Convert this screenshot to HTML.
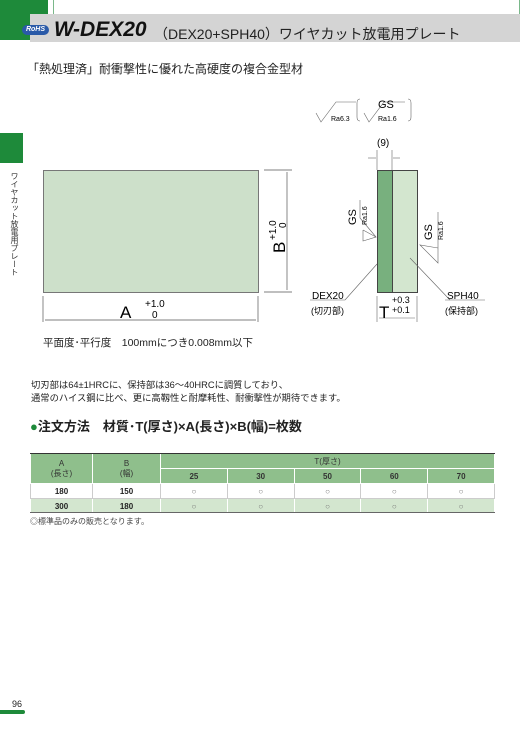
<!DOCTYPE html>
<html><head><meta charset="utf-8"><style>
*{margin:0;padding:0;box-sizing:border-box}
body{width:520px;height:738px;background:#fff;position:relative;overflow:hidden;font-family:"Liberation Sans","Noto Sans CJK JP",sans-serif;color:#222}
.a{position:absolute;white-space:nowrap}
table{border-collapse:collapse;position:absolute;left:30px;top:453px;width:465px;font-size:8px;font-weight:bold;text-align:center}
td{height:15px;border:1px solid #fff;padding:0}
.h{background:#8fbf8c;color:#333}
.g td{background:#d3e6cf}
.w td{background:#fff;border-color:#ccc}
</style></head><body>
<div class="a" style="left:0;top:0;width:48px;height:40px;background:#1e8a3a;clip-path:polygon(0 0,100% 0,100% 55%,75% 100%,0 100%)"></div>
<div class="a" style="left:53px;top:0;width:467px;height:15px;border:1px solid #7ab88a;border-top:none;background:#fff"></div>
<div class="a" style="left:30px;top:14px;width:490px;height:28px;background:#d4d4d4"></div>
<div class="a" style="left:22px;top:25px;width:27px;height:10px;background:#2a5aa8;border-radius:5px;color:#fff;font-size:7px;font-weight:bold;font-style:italic;text-align:center;line-height:10px">RoHS</div>
<div class="a" style="left:54px;top:18px;font-size:21px;font-weight:bold;font-style:italic;color:#111">W-DEX20</div>
<div class="a" style="left:154px;top:24px;font-size:14px;color:#222">（DEX20+SPH40）ワイヤカット放電用プレート</div>
<div class="a" style="left:27px;top:60px;font-size:12px">「熱処理済」耐衝撃性に優れた高硬度の複合金型材</div>
<div class="a" style="left:0;top:133px;width:23px;height:30px;background:#1e8a3a"></div>
<div class="a" style="left:10px;top:172px;font-size:8px;writing-mode:vertical-rl;text-orientation:upright;line-height:9px;color:#333">ワイヤカット放電用プレート</div>
<svg class="a" style="left:0;top:0" width="520" height="360" font-family="Liberation Sans,sans-serif">
<rect x="43.5" y="170.5" width="215" height="122" fill="#cde0ca" stroke="#777"/>
<g stroke="#555" stroke-width="0.7" fill="none">
<line x1="264" y1="170" x2="292" y2="170"/><line x1="264" y1="292" x2="292" y2="292"/>
<line x1="287" y1="172" x2="287" y2="290"/>
<line x1="43" y1="296" x2="43" y2="322"/><line x1="258" y1="296" x2="258" y2="322"/>
<line x1="45" y1="320" x2="256" y2="320"/>
</g>
<text x="120" y="318" font-size="17">A</text><text x="145" y="307" font-size="10">+1.0</text><text x="152" y="318" font-size="10">0</text>
<text transform="translate(285,253) rotate(-90)" font-size="17">B</text>
<text transform="translate(276,240) rotate(-90)" font-size="10">+1.0</text>
<text transform="translate(286,228) rotate(-90)" font-size="10">0</text>
<rect x="377.5" y="170.5" width="40" height="122" fill="#d3e6cf" stroke="#444"/>
<rect x="377.5" y="170.5" width="15" height="122" fill="#78b07e" stroke="#444"/>
<g stroke="#666" stroke-width="0.6" fill="none">
<line x1="377" y1="150" x2="377" y2="170"/><line x1="392" y1="150" x2="392" y2="170"/>
<line x1="368" y1="158" x2="376" y2="158"/><line x1="393" y1="158" x2="400" y2="158"/>
<line x1="377" y1="296" x2="377" y2="322"/><line x1="417" y1="296" x2="417" y2="322"/>
<line x1="379" y1="318" x2="415" y2="318"/>
<polyline points="316,113 321,122 336,102 356,102"/>
<polyline points="364,113 369,122 384,102 405,102"/>
<path d="M360 99 q-3 0 -3 4 v14 q0 4 3 4 M408 99 q3 0 3 4 v14 q0 4 -3 4"/>
<polyline points="363,230 376,237 363,241 363,230"/>
<polyline points="376,237 360,218 360,200"/>
<polyline points="438,248 420,245 438,263 438,212"/>
<line x1="377" y1="264" x2="345" y2="300"/><line x1="310" y1="300" x2="345" y2="300"/>
<line x1="410" y1="258" x2="450" y2="300"/><line x1="445" y1="300" x2="485" y2="300"/>
</g>
<text x="378" y="108" font-size="11">GS</text>
<text x="331" y="121" font-size="7">Ra6.3</text><text x="378" y="121" font-size="7">Ra1.6</text>
<text x="377" y="146" font-size="10">(9)</text>
<text transform="translate(356,225) rotate(-90)" font-size="11">GS</text>
<text transform="translate(367,225) rotate(-90)" font-size="7">Ra1.6</text>
<text transform="translate(432,240) rotate(-90)" font-size="11">GS</text>
<text transform="translate(443,240) rotate(-90)" font-size="7">Ra1.6</text>
<text x="312" y="299" font-size="10">DEX20</text><text x="311" y="314" font-size="9">(切刃部)</text>
<text x="447" y="299" font-size="10">SPH40</text><text x="445" y="314" font-size="9">(保持部)</text>
<text x="379" y="318" font-size="17">T</text><text x="392" y="303" font-size="9">+0.3</text><text x="392" y="313" font-size="9">+0.1</text>
</svg>
<div class="a" style="left:43px;top:335px;font-size:10.5px">平面度･平行度　100mmにつき0.008mm以下</div>
<div class="a" style="left:31px;top:379px;font-size:9.3px;line-height:12.5px">切刃部は64±1HRCに、保持部は36〜40HRCに調質しており、<br>通常のハイス鋼に比べ、更に高靱性と耐摩耗性、耐衝撃性が期待できます。</div>
<div class="a" style="left:30px;top:416px;font-size:13px;font-weight:bold"><span style="color:#1e8a3a">●</span>注文方法　材質･T(厚さ)×A(長さ)×B(幅)=枚数</div>
<table>
<tr class="h"><td rowspan="2" style="width:62px;font-weight:normal;line-height:10px">A<br>(長さ)</td><td rowspan="2" style="width:68px;font-weight:normal;line-height:10px">B<br>(幅)</td><td colspan="5" style="font-weight:normal;border-left:1px solid #333">T(厚さ)</td></tr>
<tr class="h"><td style="border-left:1px solid #333">25</td><td>30</td><td>50</td><td>60</td><td>70</td></tr>
<tr class="w"><td>180</td><td>150</td><td style="border-left:1px solid #333;font-weight:normal;color:#777">○</td><td style="font-weight:normal;color:#777">○</td><td style="font-weight:normal;color:#777">○</td><td style="font-weight:normal;color:#777">○</td><td style="font-weight:normal;color:#777">○</td></tr>
<tr class="g"><td>300</td><td>180</td><td style="border-left:1px solid #333;font-weight:normal;color:#777">○</td><td style="font-weight:normal;color:#777">○</td><td style="font-weight:normal;color:#777">○</td><td style="font-weight:normal;color:#777">○</td><td style="font-weight:normal;color:#777">○</td></tr>
</table>
<div class="a" style="left:30px;top:453px;width:465px;height:1px;background:#333"></div>
<div class="a" style="left:30px;top:512px;width:465px;height:1px;background:#666"></div>
<div class="a" style="left:30px;top:516px;font-size:8px;color:#444">◎標準品のみの販売となります。</div>
<div class="a" style="left:12px;top:699px;font-size:9px">96</div>
<div class="a" style="left:0;top:710px;width:25px;height:4px;background:#1e8a3a;border-radius:0 2px 2px 0"></div>
</body></html>
